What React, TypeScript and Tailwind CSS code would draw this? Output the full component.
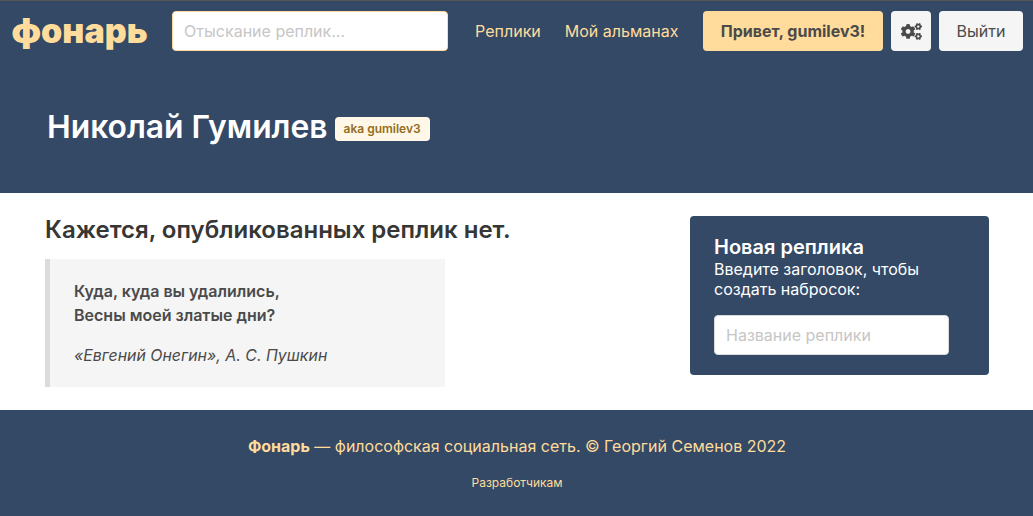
import { FaCogs } from 'react-icons/fa';

export default function App() {
    return (
        <div className="min-h-[516px] bg-white font-['Inter',sans-serif] text-[16px] text-[#4a4a4a]">
            <div className="border-t border-[#555555] bg-[#344966]">
                <nav className="flex h-[60px] items-center pl-[11.5px] pr-[10px]">
                    <a className="text-[34px] leading-none font-black text-[#ffdc9b]">фонарь</a>
                    <input
                        placeholder="Отыскание реплик..."
                        className="ml-[24.5px] h-10 w-[276px] rounded border border-[#ffdc9b] bg-white px-[11px] text-[16px] outline-none placeholder:text-[#c6c6c6]"
                    />
                    <a className="ml-[27px] text-[16px] text-[#ffdc9b]">Реплики</a>
                    <a className="ml-6 text-[16px] text-[#ffdc9b]">Мой альманах</a>
                    <div className="ml-auto flex items-center gap-2">
                        <button className="h-10 w-[180px] rounded bg-[#ffdc9b] text-[16px] font-bold text-[#4a4a4a]">Привет, gumilev3!</button>
                        <button className="flex h-10 w-10 items-center justify-center rounded bg-[#f5f5f5] text-[#4a4a4a]">
                            <FaCogs className="h-[21px] w-[21px]" />
                        </button>
                        <button className="h-10 w-[84px] rounded bg-[#f5f5f5] text-[16px] text-[#4a4a4a]">Выйти</button>
                    </div>
                </nav>
                <div className="flex h-[132px] items-start pl-[47px] pt-[42px]">
                    <h1 className="text-[31.8px] leading-[48px] font-semibold text-white">Николай Гумилев</h1>
                    <span className="ml-[7px] mt-[14px] flex h-6 items-center rounded bg-[#fff8e8] px-[9px] text-[12px] font-semibold text-[#946c20]">aka gumilev3</span>
                </div>
            </div>
            <main className="flex h-[217px] justify-between pl-[45px] pr-11 pt-[23px]">
                <div className="w-[400px]">
                    <h2 className="whitespace-nowrap text-[24px] leading-[28px] font-semibold text-[#363636]">Кажется, опубликованных реплик нет.</h2>
                    <blockquote className="mt-[15px] h-[128px] border-l-[5px] border-[#dbdbdb] bg-[#f5f5f5] py-5 pl-6 pr-6">
                        <p className="text-[16px] leading-6 font-semibold text-[#4a4a4a]">
                            Куда, куда вы удалились,
                            <br />
                            Весны моей златые дни?
                        </p>
                        <p className="mt-[17px] text-[15.9px] leading-6 italic text-[#4a4a4a]">«Евгений Онегин», А. С. Пушкин</p>
                    </blockquote>
                </div>
                <div className="h-[159px] w-[299px] rounded bg-[#344966] pl-6 pt-[19px]">
                    <h3 className="text-[20px] leading-[24px] font-semibold text-white">Новая реплика</h3>
                    <p className="w-[230px] text-[16px] leading-[20px] text-white">Введите заголовок, чтобы создать набросок:</p>
                    <input
                        placeholder="Название реплики"
                        className="mt-[16px] h-10 w-[235px] rounded border border-[#dbdbdb] bg-white px-[11px] text-[16px] outline-none placeholder:text-[#c6c6c6]"
                    />
                </div>
            </main>
            <footer className="flex h-[106px] flex-col items-center bg-[#344966] pl-px pt-6 text-[#ffdc9b]">
                <p className="text-[16px] leading-6">
                    <strong className="font-bold">Фонарь</strong> — философская социальная сеть. © Георгий Семенов 2022
                </p>
                <a className="mt-4 text-[12px] leading-[18px]">Разработчикам</a>
            </footer>
        </div>
    );
}
